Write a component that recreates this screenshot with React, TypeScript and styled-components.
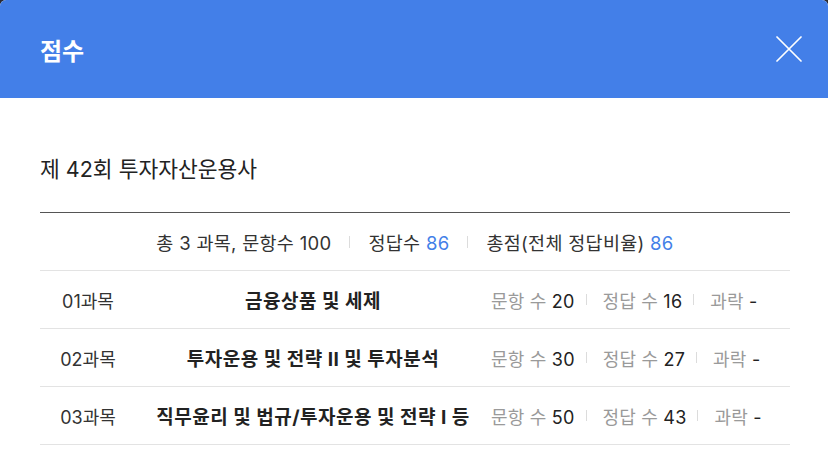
import React from 'react';
import styled, { createGlobalStyle } from 'styled-components';

const GlobalStyle = createGlobalStyle`
    html, body {
        margin: 0;
        padding: 0;
        background: #2b2b33;
    }
    body {
        font-family: Inter, "Noto Sans CJK KR", sans-serif;
        color: #222;
    }
`;

const subjects = [
    { no: '01과목', name: '금융상품 및 세제', total: 20, correct: 16, fail: '-' },
    { no: '02과목', name: '투자운용 및 전략 II 및 투자분석', total: 30, correct: 27, fail: '-' },
    { no: '03과목', name: '직무윤리 및 법규/투자운용 및 전략 I 등', total: 50, correct: 43, fail: '-' },
];

const App = () => {
    return (
        <>
            <GlobalStyle />
            <Modal>
                <Header>
                    <Title>점수</Title>
                    <CloseButton aria-label="닫기">
                        <svg width="26" height="26" viewBox="0 0 26 26">
                            <path d="M1 1L25 25M25 1L1 25" stroke="#fff" strokeWidth="1.7" strokeLinecap="round" />
                        </svg>
                    </CloseButton>
                </Header>
                <Body>
                    <ExamName>제 42회 투자자산운용사</ExamName>
                    <Summary>
                        <span>총 3 과목, 문항수 100</span>
                        <Divider $h={12} />
                        <span>정답수 <Blue>86</Blue></span>
                        <Divider $h={12} />
                        <span>총점(전체 정답비율) <Blue>86</Blue></span>
                    </Summary>
                    {subjects.map(s => (
                        <Row key={s.no}>
                            <No>{s.no}</No>
                            <Name>{s.name}</Name>
                            <Stats>
                                <Stat><Label>문항 수</Label> {s.total}</Stat>
                                <Divider $h={11} />
                                <Stat><Label>정답 수</Label> {s.correct}</Stat>
                                <Divider $h={11} />
                                <Stat><Label>과락</Label> {s.fail}</Stat>
                            </Stats>
                        </Row>
                    ))}
                </Body>
            </Modal>
        </>
    );
};

const Modal = styled.div`
    width: 828px;
    height: 457px;
    background: #fff;
    border-radius: 6px 6px 0 0;
    overflow: hidden;
`;

const Header = styled.div`
    height: 98px;
    background: #437fe8;
    display: flex;
    align-items: center;
    justify-content: space-between;
    padding: 0 26px 0 40px;
    box-sizing: border-box;
`;

const Title = styled.h1`
    margin: 0;
    font-size: 24px;
    font-weight: 700;
    color: #fff;
    font-family: "Noto Sans CJK KR", sans-serif;
`;

const CloseButton = styled.button`
    background: none;
    border: none;
    padding: 0;
    display: flex;
    cursor: pointer;
`;

const Body = styled.div`
    padding: 53px 38px 0 40px;
`;

const ExamName = styled.h2`
    margin: 0;
    font-size: 21.5px;
    font-weight: 400;
    line-height: 36px;
    color: #222;
    padding-bottom: 25px;
    border-bottom: 1px solid #555;
`;

const Summary = styled.div`
    height: 57px;
    display: flex;
    align-items: center;
    justify-content: center;
    gap: 18px;
    font-size: 18.5px;
    letter-spacing: 0.3px;
    color: #333;
    border-bottom: 1px solid #e3e3e3;
`;

const Blue = styled.span`
    color: #437fe8;
`;

const Divider = styled.span<{ $h: number }>`
    width: 1px;
    height: ${p => p.$h}px;
    background: #dcdcdc;
`;

const Row = styled.div`
    height: 57px;
    display: flex;
    align-items: center;
    border-bottom: 1px solid #e3e3e3;
    font-size: 18px;
`;

const No = styled.div`
    width: 96px;
    text-align: center;
    color: #333;
`;

const Name = styled.div`
    width: 354px;
    text-align: center;
    font-size: 19px;
    letter-spacing: 0.5px;
    font-weight: 700;
    color: #222;
    white-space: nowrap;
`;

const Stats = styled.div`
    flex: 1;
    display: flex;
    align-items: center;
    gap: 11px;
    color: #222;
    white-space: nowrap;
    padding-left: 1px;

    ${Divider} {
        margin-right: 5px;
    }
`;

const Stat = styled.span`
    letter-spacing: 0.2px;
`;

const Label = styled.span`
    color: #9a9a9a;
`;

export default App;
